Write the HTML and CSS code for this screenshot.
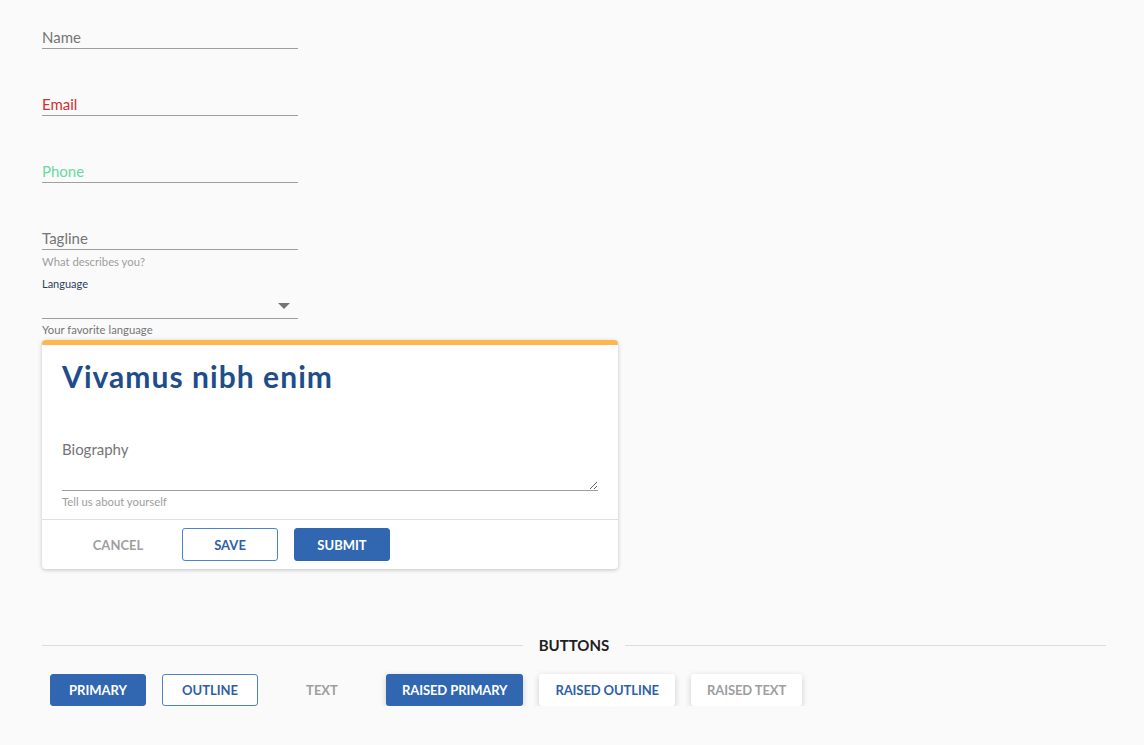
FILE: index.html
```html
<!DOCTYPE html>
<html>
<head>
<meta charset="utf-8">
<link rel="stylesheet" href="styles.css">
</head>
<body>
<div class="page">
  <div class="form">
    <div class="field"><span class="label">Name</span></div>
    <div class="field field-error"><span class="label">Email</span></div>
    <div class="field field-success"><span class="label">Phone</span></div>
    <div class="field"><span class="label">Tagline</span></div>
    <div class="help">What describes you?</div>
    <div class="select-label">Language</div>
    <div class="select"><span class="arrow"></span></div>
    <div class="help help-dark">Your favorite language</div>
  </div>

  <div class="card">
    <div class="card-body">
      <h1 class="card-title">Vivamus nibh enim</h1>
      <div class="bio-label">Biography</div>
      <textarea class="bio" rows="1"></textarea>
      <div class="help">Tell us about yourself</div>
    </div>
    <div class="card-actions">
      <button class="btn btn-text">Cancel</button>
      <button class="btn btn-outline">Save</button>
      <button class="btn btn-primary">Submit</button>
    </div>
  </div>

  <div class="section-head">
    <span class="rule"></span>
    <span class="section-title">Buttons</span>
    <span class="rule"></span>
  </div>

  <div class="btn-row">
    <button class="btn btn-primary">Primary</button>
    <button class="btn btn-outline">Outline</button>
    <button class="btn btn-text">Text</button>
    <button class="btn btn-primary raised">Raised Primary</button>
    <button class="btn btn-raised-outline raised">Raised Outline</button>
    <button class="btn btn-raised-text raised">Raised Text</button>
  </div>
</div>
</body>
</html>
```

FILE: styles.css
```css
* { box-sizing: border-box; }
html, body { margin: 0; padding: 0; background: #fafafa; }
body { font-family: Lato, "Noto Sans", sans-serif; color: #212121; }

.page { padding: 20px 38px 0 42px; }

.form { width: 256px; display: flex; flex-direction: column; }

.field {
  height: 29px;
  display: flex;
  align-items: flex-end;
  border-bottom: 1px solid #9e9e9e;
  margin-bottom: 38px;
  padding-bottom: 1px;
}
.field:nth-child(4) { margin-bottom: 0; }
.label { font-size: 15px; line-height: 20px; color: #757575; }
.field-error .label { color: #d32f2f; }
.field-success .label { color: #69d9a0; }

.help { font-size: 11.3px; line-height: 14px; color: #9e9e9e; margin-top: 5px; }
.help-dark { color: #757575; margin-top: 4px; }

.select-label { font-size: 11px; line-height: 14px; color: #2a3f5f; margin-top: 8px; }
.select {
  height: 28px;
  border-bottom: 1px solid #9e9e9e;
  display: flex;
  justify-content: flex-end;
  align-items: center;
  padding-right: 8px;
}
.arrow {
  width: 0; height: 0;
  border-left: 6px solid transparent;
  border-right: 6px solid transparent;
  border-top: 6px solid #757575;
  margin-top: 2px;
}

.card {
  width: 576px;
  margin-top: 3px;
  background: #fff;
  border-top: 5px solid #ffb74d;
  border-radius: 4px;
  box-shadow: 0 1px 4px rgba(0,0,0,0.22);
}
.card-body { padding: 13px 20px 10px; }
.card-title {
  margin: 0;
  font-size: 30px;
  line-height: 36px;
  font-weight: 700;
  color: #1f4d8a;
  letter-spacing: 1.05px;
}
.bio-label { font-size: 15px; line-height: 20px; color: #757575; margin-top: 45px; }
.bio {
  display: block;
  width: 100%;
  height: 32px;
  margin-top: 0;
  border: 0;
  border-bottom: 1px solid #9e9e9e;
  background: transparent;
  resize: vertical;
  font-family: inherit;
  outline: none;
  padding: 0;
}
.card .help { margin-top: 4px; }

.card-actions {
  border-top: 1px solid #e0e0e0;
  padding: 8px 28px 8px;
  display: flex;
  gap: 16px;
}

.btn {
  min-width: 96px;
  height: 33px;
  padding: 0 16px;
  border-radius: 3px;
  font-family: Lato, "Noto Sans", sans-serif;
  font-size: 13px;
  font-weight: 700;
  text-transform: uppercase;
  border: 1px solid transparent;
  background: transparent;
  cursor: pointer;
}
.btn-text { color: #9e9e9e; }
.btn-outline { background: #fff; border-color: #4a84d0; color: #2f5fa8; }
.btn-primary { background: #3067b0; border-color: #3067b0; color: #fff; }
.btn-raised-outline { background: #fff; color: #2f5fa8; }
.btn-raised-text { background: #fff; color: #9e9e9e; }
.raised { box-shadow: 0 2px 6px rgba(0,0,0,0.18); border: 0; letter-spacing: -0.1px; }

.section-head {
  margin-top: 66px;
  display: flex;
  align-items: center;
  gap: 16px;
}
.rule { flex: 1; height: 1px; background: #dcdcdc; }
.section-title {
  font-size: 15px;
  font-weight: 700;
  text-transform: uppercase;
  color: #212121;
  line-height: 20px;
}

.btn-row {
  display: flex;
  gap: 16px;
  padding: 19px 8px 0;
}
.btn-row .btn { height: 32px; }
```
